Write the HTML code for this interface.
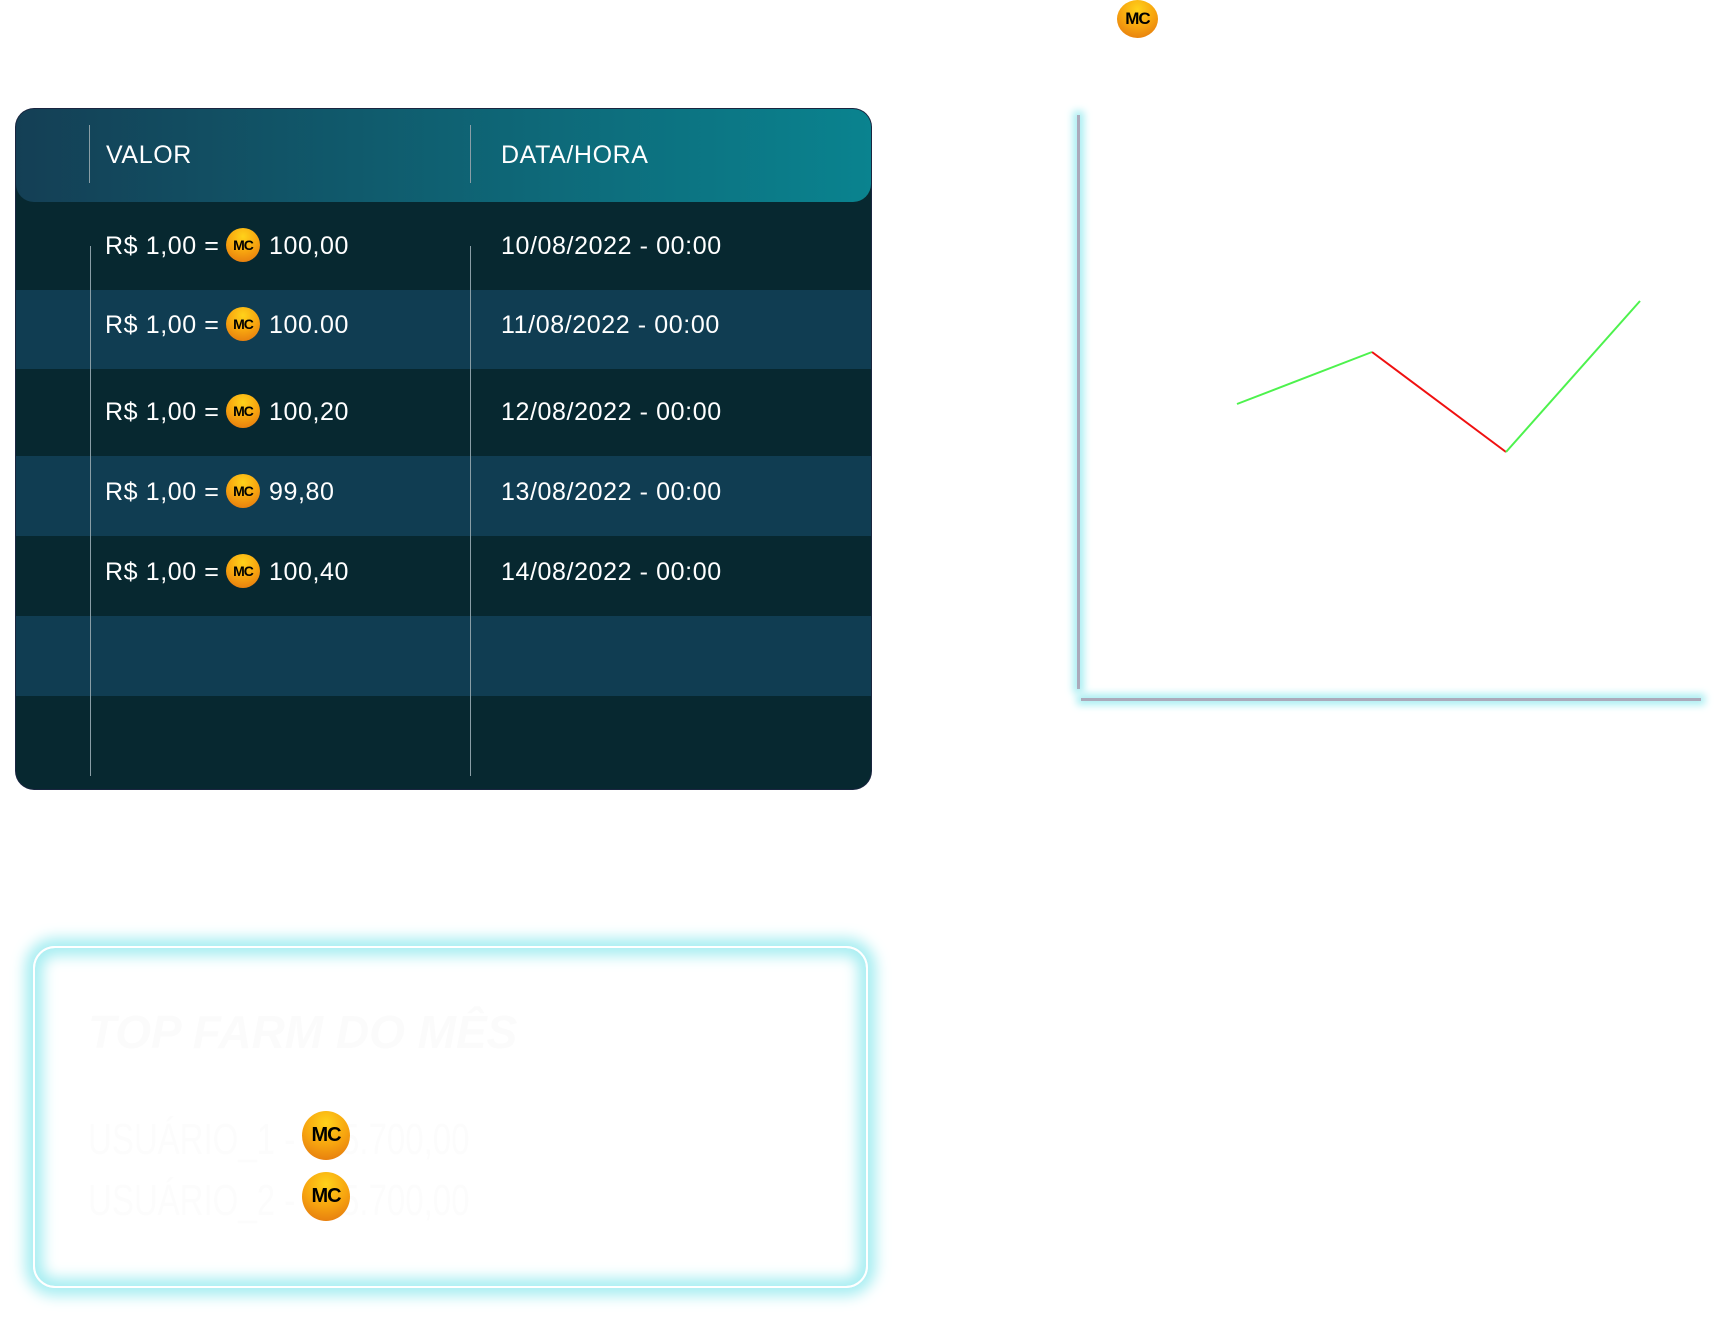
<!DOCTYPE html>
<html><head><meta charset="utf-8"><style>
body{margin:0;width:1715px;height:1320px;background:#fff;position:relative;overflow:hidden;font-family:"Liberation Sans",sans-serif}
.abs{position:absolute}
.coin{position:absolute;border-radius:50%;background:radial-gradient(circle at 50% 25%,#ffd21a 0%,#f7a40f 50%,#e0700f 100%);color:#000;font-weight:bold;text-align:center;font-family:"Liberation Sans",sans-serif;letter-spacing:-1px}
.table{left:16px;top:109px;width:855px;height:680px;border-radius:18px;background:#072830;overflow:hidden;box-shadow:0 0 0 1px #1a2540}
.hdr{left:0;top:0;width:855px;height:93px;border-radius:0 0 18px 18px;background:linear-gradient(90deg,#143f55,#0a838f)}
.row{left:0;width:855px}
.t{position:absolute;color:#fff;font-size:25px;line-height:25px;white-space:nowrap;letter-spacing:0.6px}
.vl{position:absolute;width:1px;background:#8a9ea6}
</style></head><body>
<div class="coin" style="left:1117px;top:0;width:41px;height:38px;font-size:17px;line-height:38px">MC</div>

<div class="abs table">
  <div class="abs row" style="top:181px;height:79px;background:#103d52"></div>
  <div class="abs row" style="top:347px;height:80px;background:#103d52"></div>
  <div class="abs row" style="top:507px;height:80px;background:#103d52"></div>
  <div class="abs hdr"></div>
  <div class="vl" style="left:73px;top:16px;height:58px"></div>
  <div class="vl" style="left:454px;top:16px;height:58px"></div>
  <div class="vl" style="left:74px;top:137px;height:530px"></div>
  <div class="vl" style="left:454px;top:137px;height:530px"></div>
  <div class="t" style="left:90px;top:34px">VALOR</div>
  <div class="t" style="left:485px;top:34px">DATA/HORA</div>

  <div class="t" style="left:89px;top:125px">R$ 1,00 =</div><div class="coin" style="left:210px;top:119px;width:34px;height:34px;font-size:14px;line-height:34px">MC</div><div class="t" style="left:253px;top:125px">100,00</div><div class="t" style="left:485px;top:125px">10/08/2022 - 00:00</div>
  <div class="t" style="left:89px;top:204px">R$ 1,00 =</div><div class="coin" style="left:210px;top:198px;width:34px;height:34px;font-size:14px;line-height:34px">MC</div><div class="t" style="left:253px;top:204px">100.00</div><div class="t" style="left:485px;top:204px">11/08/2022 - 00:00</div>
  <div class="t" style="left:89px;top:291px">R$ 1,00 =</div><div class="coin" style="left:210px;top:285px;width:34px;height:34px;font-size:14px;line-height:34px">MC</div><div class="t" style="left:253px;top:291px">100,20</div><div class="t" style="left:485px;top:291px">12/08/2022 - 00:00</div>
  <div class="t" style="left:89px;top:371px">R$ 1,00 =</div><div class="coin" style="left:210px;top:365px;width:34px;height:34px;font-size:14px;line-height:34px">MC</div><div class="t" style="left:253px;top:371px">99,80</div><div class="t" style="left:485px;top:371px">13/08/2022 - 00:00</div>
  <div class="t" style="left:89px;top:451px">R$ 1,00 =</div><div class="coin" style="left:210px;top:445px;width:34px;height:34px;font-size:14px;line-height:34px">MC</div><div class="t" style="left:253px;top:451px">100,40</div><div class="t" style="left:485px;top:451px">14/08/2022 - 00:00</div>
</div>

<div class="abs" style="left:1077px;top:115px;width:3px;height:574px;background:#aab;box-shadow:0 0 8px 4px #a8eef2"></div>
<div class="abs" style="left:1081px;top:698px;width:620px;height:3px;background:#aab;box-shadow:0 0 8px 4px #a8eef2"></div>
<svg class="abs" style="left:0;top:0" width="1715" height="1320">
<polyline points="1237,404 1372,352" stroke="#4df24d" stroke-width="2" fill="none"/>
<polyline points="1372,352 1506,452" stroke="#f01010" stroke-width="2" fill="none"/>
<polyline points="1506,452 1640,301" stroke="#4df24d" stroke-width="2" fill="none"/>
</svg>

<div class="abs" style="left:33px;top:946px;width:831px;height:338px;border:2px solid #fff;border-radius:22px;box-shadow:0 0 14px 8px #a8eef2, inset 0 0 14px 8px #a8eef2"></div>
<div class="abs" style="left:88px;top:1005px;font-size:46px;font-weight:bold;font-style:italic;color:#fbfbfb">TOP FARM DO MÊS</div>
<div class="abs" style="left:88px;top:1115px;font-size:44px;color:#fcfcfc;transform:scaleX(0.75);transform-origin:0 0">USUÁRIO_1 - &nbsp;&nbsp;&nbsp;&nbsp;5.700,00</div>
<div class="abs" style="left:88px;top:1176px;font-size:44px;color:#fcfcfc;transform:scaleX(0.75);transform-origin:0 0">USUÁRIO_2 - &nbsp;&nbsp;&nbsp;&nbsp;5.700,00</div>
<div class="coin" style="left:302px;top:1111px;width:48px;height:49px;font-size:20px;line-height:49px">MC</div>
<div class="coin" style="left:302px;top:1172px;width:48px;height:49px;font-size:20px;line-height:49px">MC</div>
</body></html>
